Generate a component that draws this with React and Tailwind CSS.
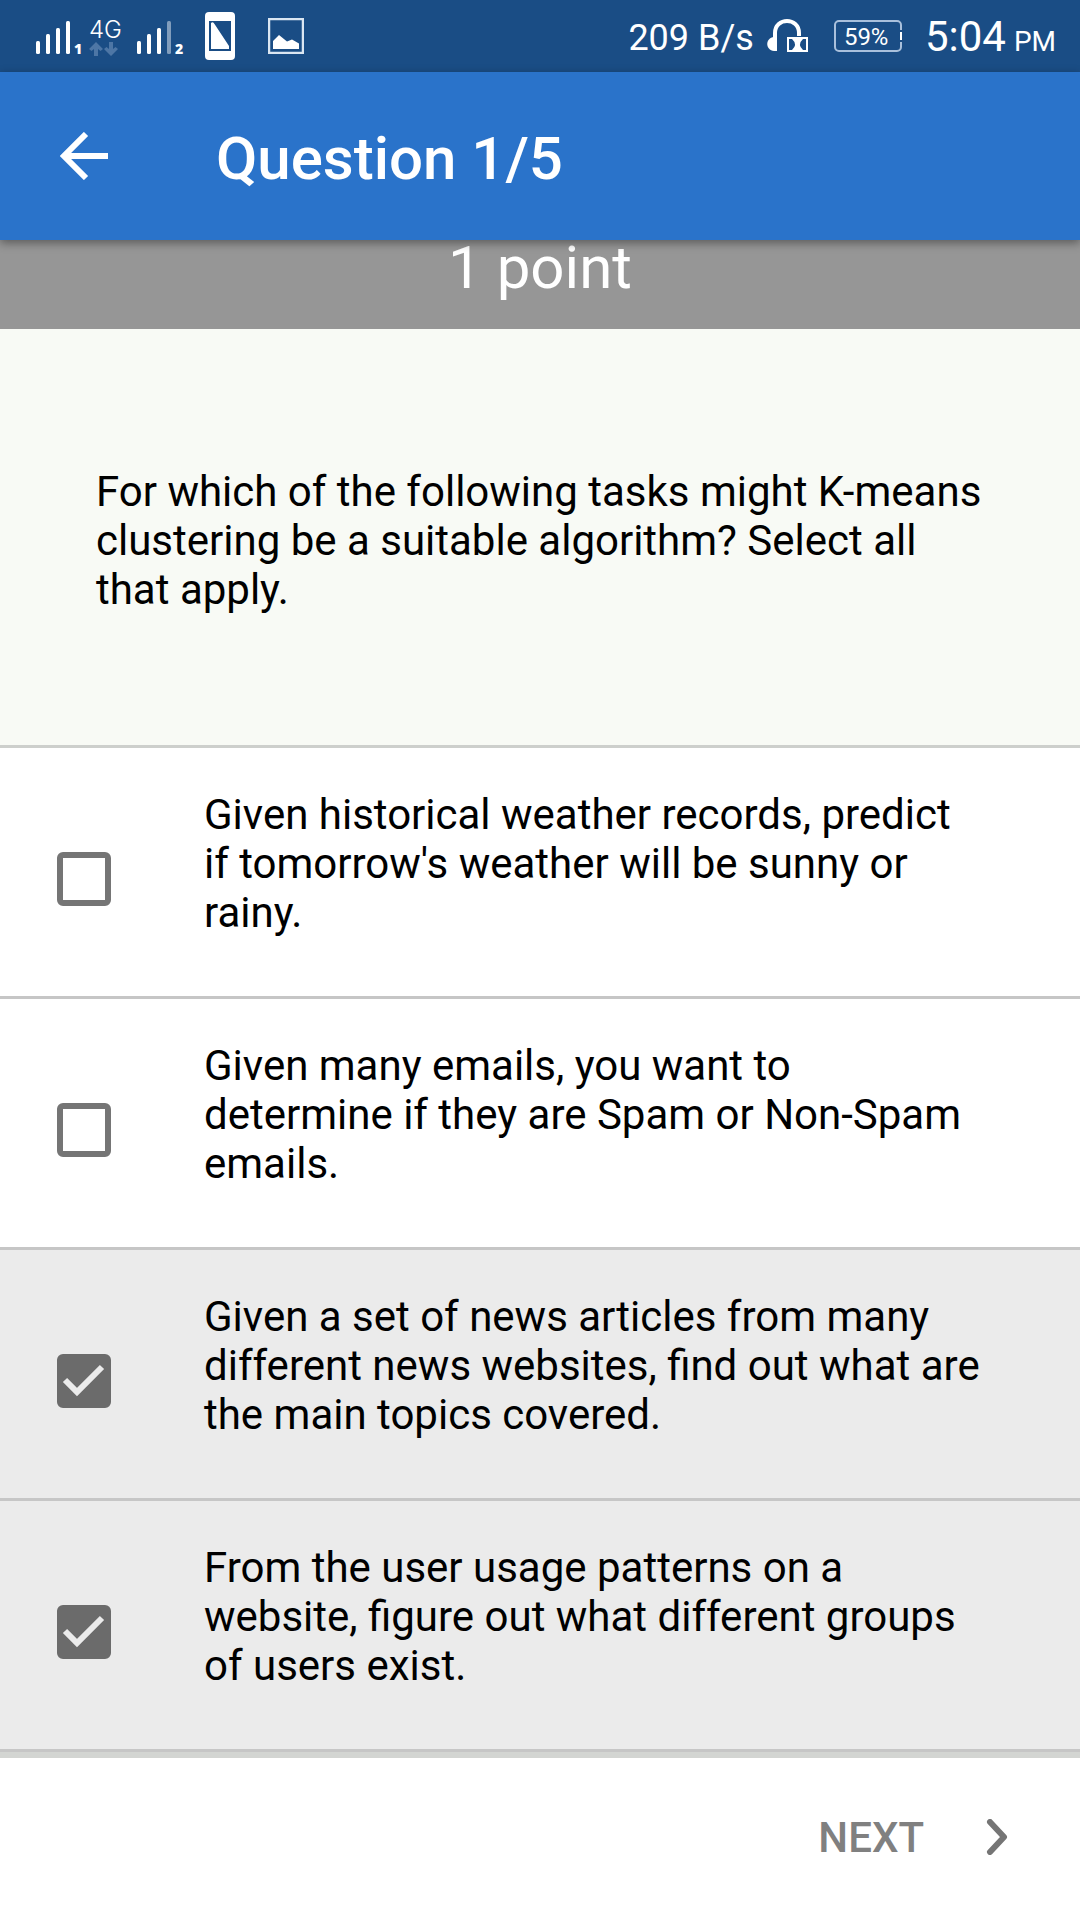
import { useState } from "react";

const OPTIONS = [
  {
    id: "weather",
    text: "Given historical weather records, predict if tomorrow's weather will be sunny or rainy.",
  },
  {
    id: "spam",
    text: "Given many emails, you want to determine if they are Spam or Non-Spam emails.",
  },
  {
    id: "news",
    text: "Given a set of news articles from many different news websites, find out what are the main topics covered.",
  },
  {
    id: "usage",
    text: "From the user usage patterns on a website, figure out what different groups of users exist.",
  },
];

function SignalBars({ weak }) {
  return (
    <svg width="36" height="34" viewBox="0 0 36 34" fill="white" aria-hidden="true">
      <rect x="0" y="20" width="4" height="13" rx="1.5" />
      <rect x="10" y="13" width="4" height="20" rx="1.5" />
      <rect x="20" y="7" width="4" height="26" rx="1.5" />
      <rect x="30" y="0" width="4" height="33" rx="1.5" opacity={weak ? 0.45 : 1} />
    </svg>
  );
}

function DataArrows() {
  return (
    <svg width="30" height="14" viewBox="0 0 30 14" fill="#4d76a5" aria-hidden="true">
      <path d="M7 0 L14 7 L11.5 9 L9 7 V14 H5 V7 L2.5 9 L0 7 Z" />
      <path d="M22 14 L15 7 L17.5 5 L20 7 V0 H24 V7 L26.5 5 L29 7 Z" />
    </svg>
  );
}

function PhoneIcon() {
  return (
    <svg width="30" height="48" viewBox="0 0 30 48" aria-hidden="true">
      <rect width="30" height="48" rx="4" fill="white" />
      <rect x="4" y="9" width="22" height="30" fill="#1a4d85" />
      <path d="M6 11 Q8 9 9.500 12 L24 34 V37 H6 Z" fill="white" />
    </svg>
  );
}

function PictureIcon() {
  return (
    <svg width="36" height="36" viewBox="0 0 36 36" aria-hidden="true">
      <rect x="1" y="1" width="34" height="34" fill="none" stroke="#dbe6f2" strokeWidth="2.500" />
      <path d="M5 31 V23 L11 17 L19 23.500 L24 21.500 L31 25.500 V31 Z" fill="white" />
    </svg>
  );
}

function HeadphonesIcon() {
  return (
    <svg width="41" height="34" viewBox="0 0 41 34" aria-hidden="true">
      <path d="M8 21 V14 C8 -2 32 -2 32 14 V17" fill="none" stroke="white" strokeWidth="4" />
      <path d="M10 18 V32 H7 C-2 31 -2 19 7 18 Z" fill="white" />
      <rect x="20" y="18" width="21" height="15" fill="white" />
      <path d="M22 20 H25 Q31 25.5 25 31 H22 Z M39 20 H36 Q30 25.5 36 31 H39 Z" fill="#1a4d85" />
    </svg>
  );
}

function StatusBar() {
  return (
    <div className="flex h-[72px] shrink-0 items-center justify-between bg-[#1a4d85] pr-6 pl-9 text-white">
      <div className="flex items-center">
        <div className="flex w-[53px] items-end pt-[4px]">
          <SignalBars />
          <span className="pl-[2px] font-['Open_Sans',sans-serif] text-[14px] leading-[12px] font-extrabold">1</span>
        </div>
        <div className="flex w-[48px] flex-col pt-[2px]">
          <span className="font-['Inter',sans-serif] text-[24px] leading-[24px] font-light">4G</span>
          <DataArrows />
        </div>
        <div className="flex w-[68px] items-end pt-[4px]">
          <SignalBars weak />
          <span className="pl-[2px] font-['Open_Sans',sans-serif] text-[14px] leading-[12px] font-extrabold">2</span>
        </div>
        <PhoneIcon />
        <div className="pl-[33px]">
          <PictureIcon />
        </div>
      </div>
      <div className="flex items-center">
        <span className="pt-[4px] text-[36px] leading-[42px]">209 B/s</span>
        <div className="pl-[13px]">
          <HeadphonesIcon />
        </div>
        <div className="relative ml-[26px] flex h-8 w-[68px] items-center rounded-[5px] border-2 border-[#a9c0dc] pt-[2px] pl-[8px]">
          <span className="text-[24px] leading-[28px]">59%</span>
          <span className="absolute top-[8px] -right-[2px] h-[12px] w-[2px] border-y-2 border-[#1a4d85] bg-white" />
        </div>
        <div className="flex items-baseline pt-[2px] pl-[23px]">
          <span className="text-[42px] leading-[48px]">5:04</span>
          <span className="pl-[8px] text-[28px] leading-[36px]">PM</span>
        </div>
      </div>
    </div>
  );
}

function AppBar() {
  return (
    <header className="z-10 flex h-[168px] shrink-0 items-center bg-[#2a73ca] text-white shadow-[0_3px_9px_rgba(0,0,0,0.4)]">
      <button type="button" aria-label="Back" className="flex w-[216px] items-center pl-[60px]">
        <svg width="48" height="48" viewBox="0 0 48 48" fill="none" stroke="white" strokeWidth="6" aria-hidden="true">
          <path d="M48 24 H5 M26 2 L4 24 L26 46" />
        </svg>
      </button>
      <h1 className="pt-[6px] text-[60px] leading-[72px] font-medium">Question 1/5</h1>
    </header>
  );
}

function Option({ option, checked, onChange }) {
  return (
    <li className="border-b-[3px] border-[#c6c6c6]">
      <label
        htmlFor={option.id}
        className="flex items-start bg-white pt-[42px] pr-24 pb-[59px] pl-[57px] has-[:checked]:bg-[#ebebeb]"
      >
        <span className="relative mt-[62px] mr-[93px] block size-[54px] shrink-0">
          <input
            id={option.id}
            type="checkbox"
            checked={checked}
            onChange={onChange}
            className="block size-[54px] appearance-none rounded-[6px] border-[6px] border-[#757575] checked:border-[#6b6b6b] checked:bg-[#6b6b6b]"
          />
          {checked && (
            <svg
              className="pointer-events-none absolute inset-0"
              width="54"
              height="54"
              viewBox="0 0 54 54"
              fill="none"
              stroke="#ebebeb"
              strokeWidth="6"
              aria-hidden="true"
            >
              <path d="M8 26 L20 38 L45 13" />
            </svg>
          )}
        </span>
        <span>{option.text}</span>
      </label>
    </li>
  );
}

export default function App() {
  const [selected, setSelected] = useState(["news", "usage"]);

  const toggle = (id) =>
    setSelected((current) =>
      current.includes(id) ? current.filter((item) => item !== id) : [...current, id]
    );

  return (
    <div className="flex min-h-screen flex-col bg-[#d3d5d2] font-['Roboto',sans-serif] text-[42px] leading-[49px] text-black">
      <StatusBar />
      <AppBar />
      <main>
        <p className="bg-[#969696] pb-[34px] text-center text-[60px] leading-[55px] text-white">1 point</p>
        <h2 className="border-b-[3px] border-[#cdcfcc] bg-[#f8faf5] px-24 pt-[138px] pb-[131px]">
          For which of the following tasks might K-means clustering be a suitable algorithm? Select all that apply.
        </h2>
        <ul>
          {OPTIONS.map((option) => (
            <Option
              key={option.id}
              option={option}
              checked={selected.includes(option.id)}
              onChange={() => toggle(option.id)}
            />
          ))}
        </ul>
      </main>
      <footer className="mt-auto flex h-[162px] items-center justify-end bg-white pr-[72px] pb-1">
        <button type="button" className="flex items-center gap-[62px] font-medium text-[#808080]">
          NEXT
          <svg width="22" height="36" viewBox="0 0 22 36" fill="none" stroke="#757575" strokeWidth="6" strokeLinecap="round" strokeLinejoin="round" aria-hidden="true">
            <path d="M4 3 L18 18 L4 33" />
          </svg>
        </button>
      </footer>
    </div>
  );
}
